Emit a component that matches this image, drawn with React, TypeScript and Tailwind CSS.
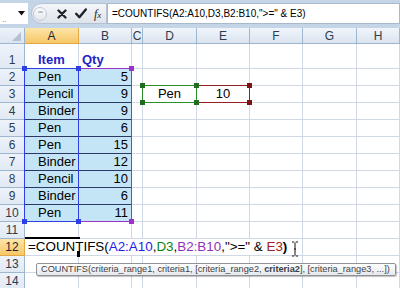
import React from "react";

const COLS = [
  { key: "A", w: "w-[54px]" },
  { key: "B", w: "w-[53px]" },
  { key: "C", w: "w-[11px]" },
  { key: "D", w: "w-[54px]" },
  { key: "E", w: "w-[53px]" },
  { key: "F", w: "w-[53px]" },
  { key: "G", w: "w-[54px]" },
  { key: "H", w: "flex-1" },
];

const ITEMS: [string, number][] = [
  ["Pen", 5],
  ["Pencil", 9],
  ["Binder", 9],
  ["Pen", 6],
  ["Pen", 15],
  ["Binder", 12],
  ["Pencil", 10],
  ["Binder", 6],
  ["Pen", 11],
];

const grid = "border-r border-b border-[#d0d7e5]";

function RowHead({ n, active }: { n: number; active?: boolean }) {
  return (
    <div
      className={`w-[25px] shrink-0 h-full flex items-end justify-center pb-[1px] text-[12px] leading-[14px] border-r border-b ${
        active
          ? "bg-gradient-to-b from-[#fce6a8] to-[#f6c766] border-[#e2a843] text-[#1f2430]"
          : "bg-gradient-to-b from-[#eef3fa] to-[#e1e9f4] border-[#9eb6ce] text-[#2f3c4c]"
      }`}
    >
      {n}
    </div>
  );
}

function Cell({
  w,
  className = "",
  children,
}: {
  w: string;
  className?: string;
  children?: React.ReactNode;
}) {
  return (
    <div className={`${w} shrink-0 h-full flex items-end whitespace-nowrap overflow-hidden ${className}`}>
      {children}
    </div>
  );
}

function EmptyCells({ from = 0 }: { from?: number }) {
  return (
    <>
      {COLS.slice(from).map((c) => (
        <Cell key={c.key} w={c.w} className={grid} />
      ))}
    </>
  );
}

function Handle({ className }: { className: string }) {
  return <div className={`absolute w-[5px] h-[5px] ${className}`} />;
}

export default function App() {
  return (
    <div className="relative w-[400px] h-[288px] overflow-hidden bg-white font-['Liberation_Sans',Arial,sans-serif] text-black">
      {/* formula bar */}
      <div className="h-[28px] bg-[#c5d5e8] pt-[3px]">
        <div className="flex h-[21px]">
          <div className="w-[28px] bg-white flex items-center relative">
            <span className="absolute left-[2px] top-[13px] text-[8px] leading-none text-[#666]">..</span>
            <svg className="absolute left-[18px] top-[8px]" width="7" height="5" viewBox="0 0 7 5">
              <path d="M0 0h7L3.5 4.5z" fill="#111" />
            </svg>
          </div>
          <div className="w-[3px]" />
          <div className="w-[76px] flex items-center rounded-l-full bg-gradient-to-b from-[#f4f6f9] to-[#dfe4eb] border border-[#b3c1d2]">
            <div className="ml-[1px] w-[14px] h-[14px] rounded-full border border-[#c0c9d4] bg-gradient-to-b from-[#fbfcfd] to-[#e3e8ee] flex items-start justify-center">
              <div className="mt-[3px] w-[5px] h-[2px] rounded-full bg-[#b9c2cc]" />
            </div>
            <svg className="ml-[10px]" width="10" height="10" viewBox="0 0 10 10">
              <path d="M1.5 1.5l7 7M8.5 1.5l-7 7" stroke="#1e2329" strokeWidth="2.3" strokeLinecap="round" />
            </svg>
            <svg className="ml-[8px]" width="12" height="11" viewBox="0 0 12 11">
              <path d="M1.2 5.8l3.2 3.4L10.8 1.5" stroke="#1e2329" strokeWidth="2.4" fill="none" strokeLinecap="round" strokeLinejoin="round" />
            </svg>
            <span className="ml-[7px] font-['Liberation_Serif',serif] italic text-[12px] leading-none text-[#222]">
              f<span className="text-[9px]">x</span>
            </span>
          </div>
          <div className="flex-1 bg-white border border-[#a9b9cc] flex items-center pl-[4px] text-[10px] leading-none whitespace-nowrap">
            =COUNTIFS(A2:A10,D3,B2:B10,"&gt;=" &amp; E3)
          </div>
        </div>
      </div>

      {/* column headers */}
      <div className="flex h-[16px]">
        <div className="w-[25px] shrink-0 h-full relative bg-gradient-to-b from-[#eef3fa] to-[#dbe5f1] border-r border-b border-[#9eb6ce]">
          <svg className="absolute right-[3px] bottom-[2px]" width="9" height="9" viewBox="0 0 9 9">
            <path d="M9 0v9H0z" fill="#b3c1d3" />
          </svg>
        </div>
        {COLS.map((c) => (
          <div
            key={c.key}
            className={`${c.w} shrink-0 h-full flex items-center justify-center text-[12px] leading-none border-r border-b ${
              c.key === "A"
                ? "bg-gradient-to-b from-[#fce6a8] to-[#f6c766] border-[#e2a843] text-[#1f2430]"
                : "bg-gradient-to-b from-[#f1f5fb] to-[#dae4f0] border-[#9eb6ce] text-[#2f3c4c]"
            }`}
          >
            {c.key}
          </div>
        ))}
      </div>

      {/* row 1 */}
      <div className="flex h-[25px]">
        <RowHead n={1} />
        <Cell w="w-[54px]" className={`${grid} pl-[13px] pb-[1px] text-[13px] leading-[15px] font-bold text-[#2424c8]`}>
          Item
        </Cell>
        <Cell w="w-[53px]" className={`${grid} pl-[3px] pb-[1px] text-[13px] leading-[15px] font-bold text-[#2424c8]`}>
          Qty
        </Cell>
        <EmptyCells from={2} />
      </div>

      {/* rows 2-10 */}
      {ITEMS.map(([item, qty], i) => {
        const n = i + 2;
        return (
          <div key={n} className="flex h-[17px]">
            <RowHead n={n} />
            <Cell w="w-[54px]" className="bg-[#c4e5f6] border-r border-b border-r-[#d0d7e5] border-b-[#2c3866] pl-[13px] text-[13px] leading-[16px]">
              {item}
            </Cell>
            <Cell w="w-[53px]" className="bg-[#c4e5f6] border-r border-b border-r-[#d0d7e5] border-b-[#2c3866] justify-end pr-[3px] text-[13px] leading-[16px]">
              {qty}
            </Cell>
            <Cell w="w-[11px]" className={grid} />
            <Cell w="w-[54px]" className={`${grid} justify-center text-[13px] leading-[16px]`}>
              {n === 3 ? "Pen" : null}
            </Cell>
            <Cell w="w-[53px]" className={`${grid} justify-center text-[13px] leading-[16px]`}>
              {n === 3 ? "10" : null}
            </Cell>
            <EmptyCells from={5} />
          </div>
        );
      })}

      {/* row 11 */}
      <div className="flex h-[17px]">
        <RowHead n={11} />
        <EmptyCells />
      </div>

      {/* row 12, in-cell editor */}
      <div className="flex h-[17px]">
        <RowHead n={12} active />
        <div className="w-[262px] shrink-0 h-full bg-white border-b border-[#d0d7e5] pl-[3px] text-[13.4px] leading-[16px] whitespace-nowrap">
          =COUNTIFS(<span className="text-[#1d1df0]">A2:A10</span>,<span className="text-[#0b840b]">D3</span>,
          <span className="text-[#9030b8]">B2:B10</span>,"&gt;=" &amp;{" "}
          <span className="text-[#9c1e1e]">E3</span>
          <span className="font-bold">)</span>
        </div>
        <Cell w="w-[16px]" className={grid} />
        <EmptyCells from={6} />
      </div>

      {/* rows 13-14 */}
      {[13, 14].map((n) => (
        <div key={n} className="flex h-[17px]">
          <RowHead n={n} />
          <EmptyCells />
        </div>
      ))}

      {/* range highlights */}
      <div className="absolute left-[78px] top-[68px] w-[54px] h-[154px] border border-[#9b32c9]" />
      <Handle className="left-[129px] top-[66px] bg-[#9b32c9]" />
      <Handle className="left-[129px] top-[219px] bg-[#9b32c9]" />
      <div className="absolute left-[24px] top-[68px] w-[55px] h-[154px] border border-[#2f3fe6]" />
      <Handle className="left-[22px] top-[66px] bg-[#2f3fe6]" />
      <Handle className="left-[76px] top-[66px] bg-[#2f3fe6]" />
      <Handle className="left-[22px] top-[219px] bg-[#2f3fe6]" />
      <Handle className="left-[76px] top-[219px] bg-[#2f3fe6]" />

      <div className="absolute left-[196px] top-[85px] w-[54px] h-[18px] border border-[#922222]" />
      <Handle className="left-[247px] top-[83px] bg-[#7a1414]" />
      <Handle className="left-[247px] top-[100px] bg-[#7a1414]" />
      <div className="absolute left-[142px] top-[85px] w-[55px] h-[18px] border border-[#2b8f2b]" />
      <Handle className="left-[140px] top-[83px] bg-[#1f6e1f]" />
      <Handle className="left-[194px] top-[83px] bg-[#1f6e1f]" />
      <Handle className="left-[140px] top-[100px] bg-[#1f6e1f]" />
      <Handle className="left-[194px] top-[100px] bg-[#1f6e1f]" />

      {/* active cell edge + fill handle */}
      <div className="absolute left-[25px] top-[237px] w-[55px] h-[2px] bg-black" />
      <div className="absolute left-[77px] top-[251px] w-[3px] h-[6px] bg-black" />

      {/* text caret mouse cursor */}
      <svg className="absolute left-[291px] top-[241px]" width="8" height="16" viewBox="0 0 8 16">
        <path d="M1 1h2.2M4.8 1H7M4 1.5v13M1 15h2.2M4.8 15H7M3 8h2" stroke="#111" strokeWidth="1" fill="none" />
      </svg>

      {/* function tooltip */}
      <div className="absolute left-[36px] top-[263px] w-[360px] h-[13px] border border-[#8f9399] rounded-[2px] bg-gradient-to-b from-[#ffffff] to-[#e6e8ec] shadow-[1px_1px_1px_rgba(0,0,0,0.25)] flex items-center pl-[4px] text-[9.2px] leading-none text-[#3b3f46] whitespace-nowrap">
        COUNTIFS(criteria_range1, criteria1, [criteria_range2,&nbsp;<span className="font-bold">criteria2</span>], [criteria_range3, ...])
      </div>
    </div>
  );
}
